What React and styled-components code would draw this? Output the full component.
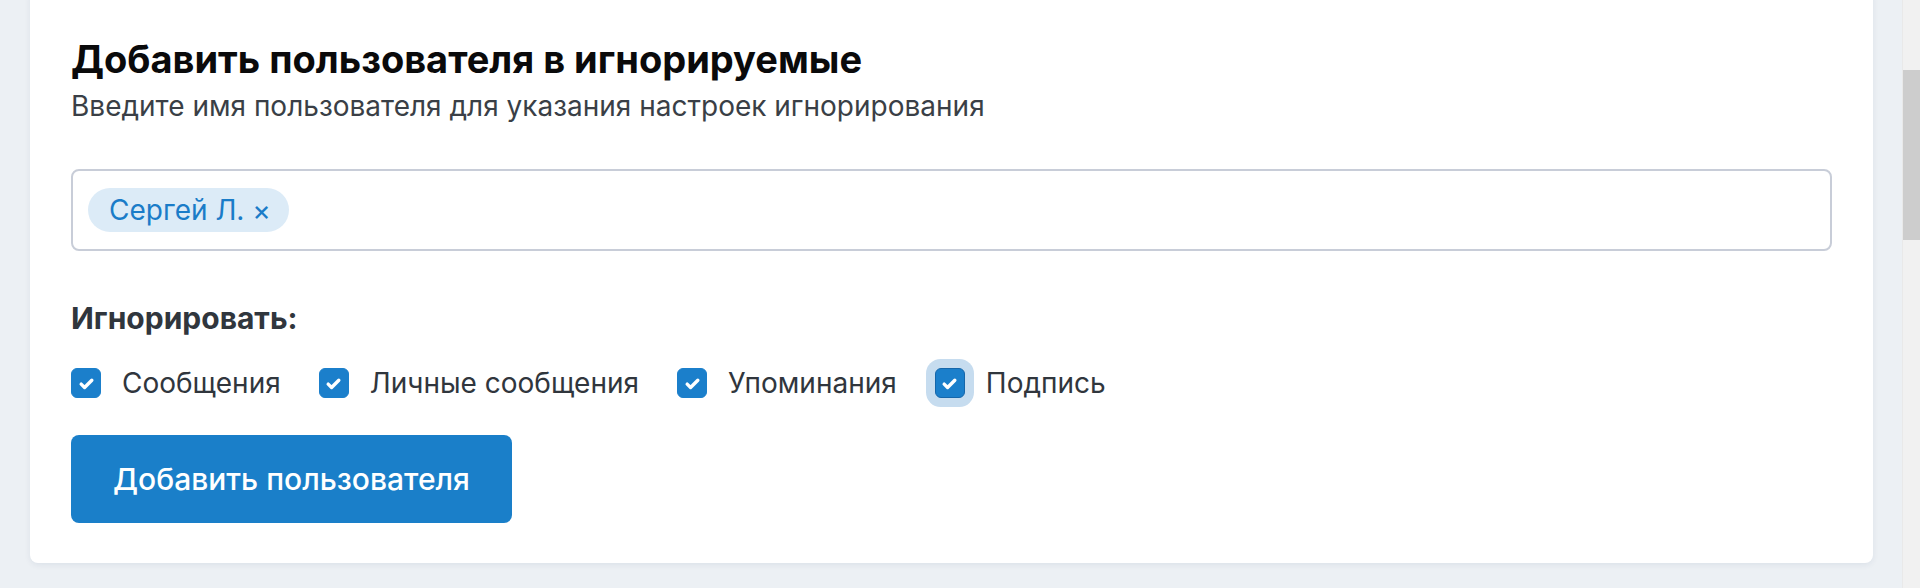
import React from "react";
import styled, { createGlobalStyle } from "styled-components";

const Global = createGlobalStyle`
  html, body { margin: 0; padding: 0; height: 100%; overflow: hidden; }
  body { font-family: Inter, "Noto Sans", sans-serif; background: #ecf0f4; }
`;

const Layout = styled.div`
  display: flex;
  height: 588px;
  width: 1920px;
`;

const Main = styled.main`
  flex: 1;
  overflow: hidden;
  background: #ecf0f4;
  padding: 0 29px 0 30px;
`;

const ScrollTrack = styled.div`
  width: 17px;
  background: #f1f1f1;
  border-left: 1px solid #e9e9e9;
  display: flex;
  flex-direction: column;
`;

const Thumb = styled.div`
  margin-top: 70px;
  height: 170px;
  background: #cdcdcd;
`;

const Card = styled.section`
  margin-top: -12px;
  background: #fff;
  border-radius: 8px;
  box-shadow: 0 2px 6px rgba(20, 40, 80, 0.07);
  padding: 48px 41px 40px;
  display: flex;
  flex-direction: column;
`;

const Title = styled.h2`
  margin: 0;
  font-size: 38px;
  line-height: 46px;
  font-weight: 700;
  color: #0a0a0b;
`;

const Subtitle = styled.p`
  margin: 7px 0 0;
  font-size: 28px;
  line-height: 34px;
  color: #3a3f46;
`;

const TagInput = styled.div`
  margin-top: 46px;
  border: 2px solid #c8cdd8;
  border-radius: 8px;
  padding: 17px 15px;
  display: flex;
  align-items: center;
  gap: 10px;
`;

const Tag = styled.span`
  display: inline-flex;
  align-items: center;
  height: 44px;
  padding: 0 18px 0 21px;
  border-radius: 22px;
  background: #dcebf7;
  color: #1a7cc8;
  font-size: 28px;
`;

const Label = styled.div`
  margin-top: 49px;
  font-size: 30px;
  line-height: 36px;
  font-weight: 700;
  color: #30363d;
`;

const Options = styled.div`
  margin-top: 31px;
  display: flex;
  align-items: center;
  gap: 38px;
`;

const Option = styled.label`
  display: inline-flex;
  align-items: center;
  gap: 21px;
  font-size: 28px;
  line-height: 32px;
  color: #30363d;
`;

const Box = styled.span`
  width: 30px;
  height: 30px;
  box-sizing: border-box;
  border-radius: 6px;
  background: #1b7fcb;
  border: 1px solid ${(p) => (p.$focused ? "#1566aa" : "#1b7fcb")};
  display: inline-flex;
  align-items: center;
  justify-content: center;
  box-shadow: ${(p) => (p.$focused ? "0 0 0 9px #c6dcef" : "none")};
`;

const Button = styled.button`
  margin-top: 36px;
  align-self: flex-start;
  width: 441px;
  height: 88px;
  border: none;
  border-radius: 8px;
  background: #1a7fc9;
  color: #fff;
  font-family: Inter, "Noto Sans", sans-serif;
  font-size: 30px;
  font-weight: 500;
`;

const Check = () => (
  <svg width="17" height="17" viewBox="0 0 16 16" fill="none">
    <path d="M3 8.6l3.2 3.1L13 4.9" stroke="#fff" strokeWidth="3.2" strokeLinecap="round" strokeLinejoin="round" />
  </svg>
);

const options = [
  { label: "Сообщения" },
  { label: "Личные сообщения" },
  { label: "Упоминания" },
  { label: "Подпись", focused: true },
];

export default function App() {
  return (
    <>
      <Global />
      <Layout>
        <Main>
          <Card>
            <Title>Добавить пользователя в игнорируемые</Title>
            <Subtitle>Введите имя пользователя для указания настроек игнорирования</Subtitle>
            <TagInput>
              <Tag>Сергей Л. ×</Tag>
            </TagInput>
            <Label>Игнорировать:</Label>
            <Options>
              {options.map((o) => (
                <Option key={o.label}>
                  <Box $focused={o.focused}>
                    <Check />
                  </Box>
                  {o.label}
                </Option>
              ))}
            </Options>
            <Button>Добавить пользователя</Button>
          </Card>
        </Main>
        <ScrollTrack>
          <Thumb />
        </ScrollTrack>
      </Layout>
    </>
  );
}
